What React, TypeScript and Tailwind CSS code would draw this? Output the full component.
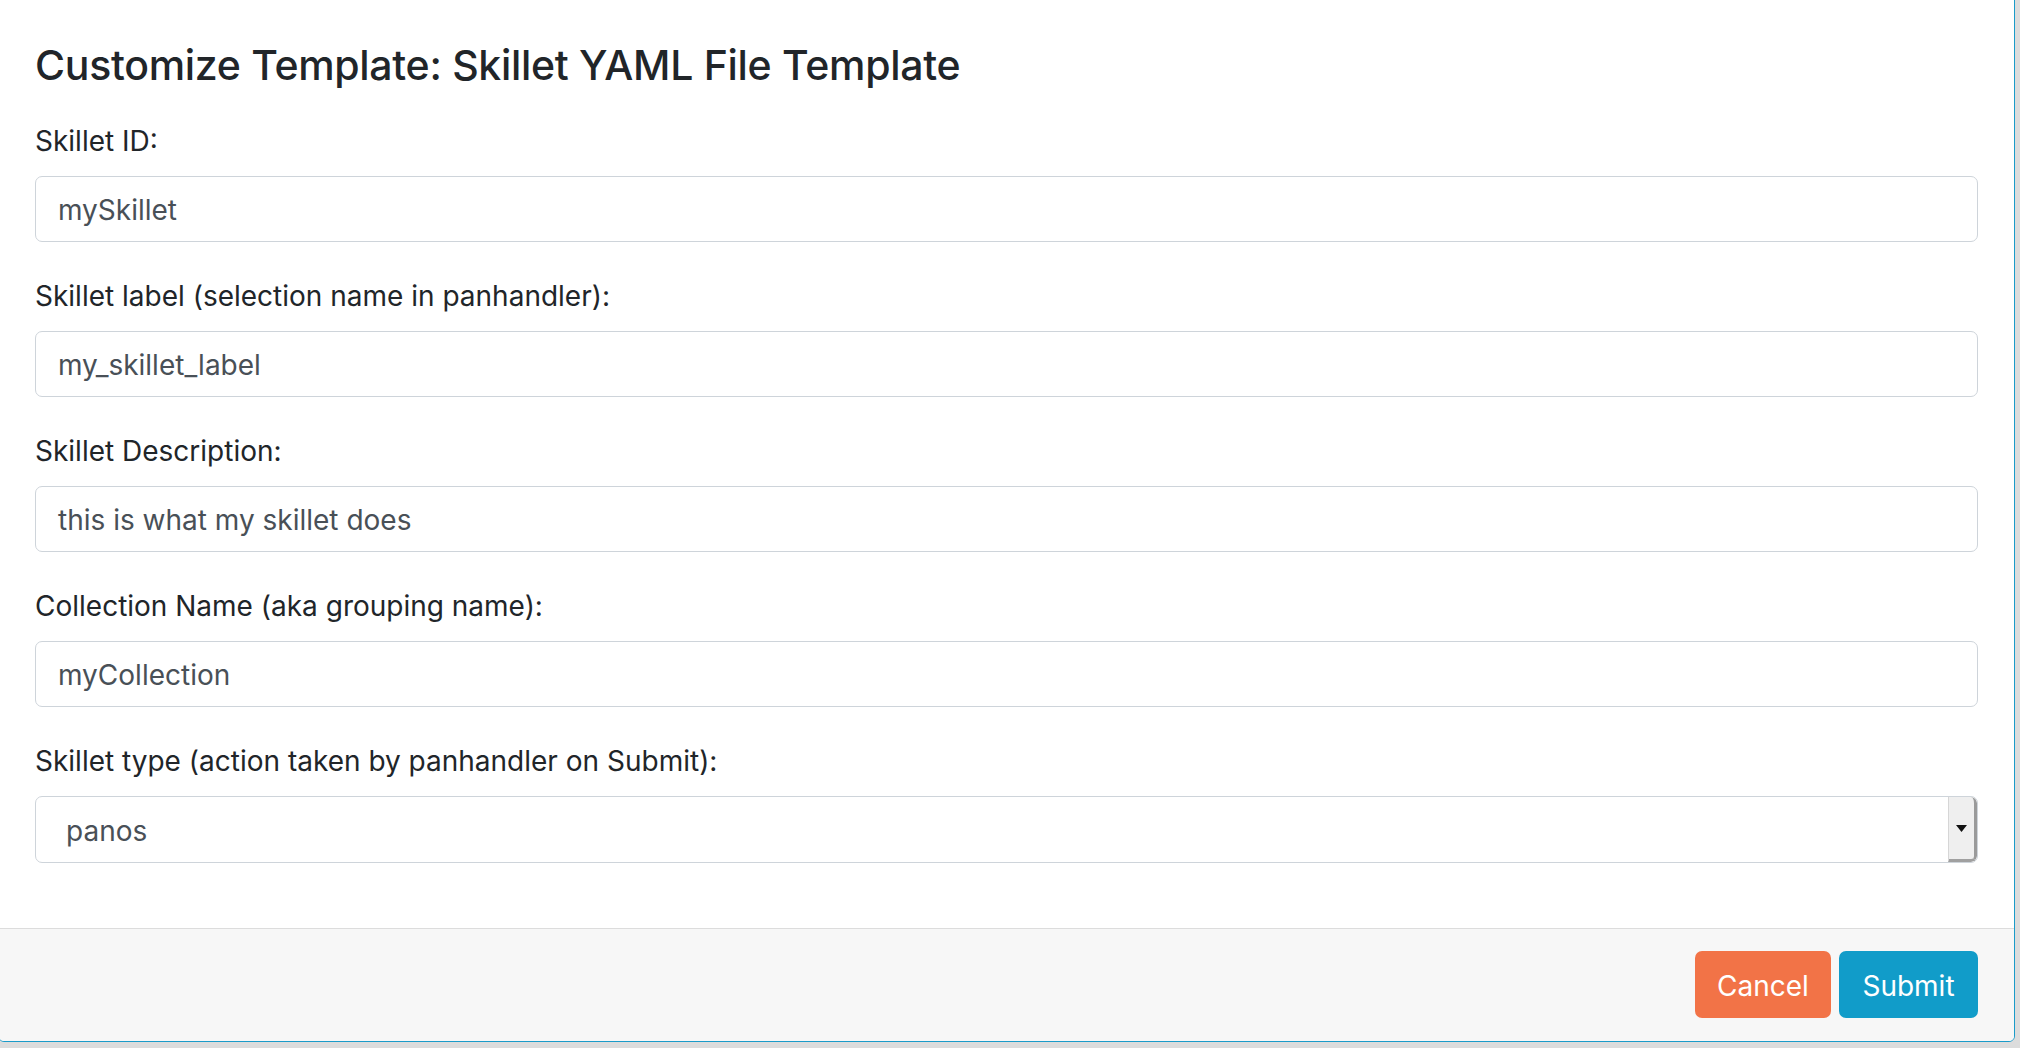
import React from "react";

const fields = [
  { label: "Skillet ID:", value: "mySkillet" },
  { label: "Skillet label (selection name in panhandler):", value: "my_skillet_label" },
  { label: "Skillet Description:", value: "this is what my skillet does" },
  { label: "Collection Name (aka grouping name):", value: "myCollection" },
];

export default function App() {
  return (
    <div
      className="w-[2020px] h-[1048px] overflow-hidden bg-[#dcdcdc]"
      style={{ fontFamily: "Inter, 'Liberation Sans', Arial, sans-serif" }}
    >
      <div className="-ml-[2px] -mt-[10px] w-[2017px] h-[1052px] border border-[#1a9bc9] rounded-[6px] bg-white flex flex-col overflow-hidden">
        <div className="flex-1 flex flex-col px-[36px] pt-[48px]">
          <h4 className="text-[41px] leading-[50px] h-[50px] font-medium text-[#212529] tracking-[-0.3px] mb-[29px] pt-[1px]">
            Customize Template: Skillet YAML File Template
          </h4>
          <div className="flex flex-col gap-[31px]">
            {fields.map((f) => (
              <div key={f.label} className="flex flex-col">
                <label className="text-[28px] leading-[42px] h-[42px] text-[#212529] mb-[16px] pt-[2px]">
                  {f.label}
                </label>
                <div className="h-[66px] border border-[#ced4da] rounded-[7px] flex items-center px-[22px] pt-[2px] text-[28px] text-[#495057]">
                  {f.value}
                </div>
              </div>
            ))}
            <div className="flex flex-col">
              <label className="text-[28px] leading-[42px] h-[42px] text-[#212529] mb-[16px] pt-[2px]">
                Skillet type (action taken by panhandler on Submit):
              </label>
              <div className="h-[67px] border border-[#ced4da] rounded-[7px] flex items-stretch text-[28px] text-[#495057] overflow-hidden">
                <div className="flex-1 flex items-center pl-[30px] pt-[2px]">panos</div>
                <div className="w-[29px] bg-[#efefef] border-l border-[#d6d6d6] border-r-[3px] border-r-[#9a9a9a] border-b-[3px] border-b-[#a0a0a0] rounded-r-[6px] flex items-center justify-center">
                  <svg width="11" height="7" viewBox="0 0 11 7">
                    <polygon points="0,0 11,0 5.5,7" fill="#111" />
                  </svg>
                </div>
              </div>
            </div>
          </div>
        </div>
        <div className="h-[113px] border-t border-[#dcdcdc] bg-[#f7f7f7] flex items-start justify-end gap-[8px] px-[36px] pt-[22px]">
          <button className="w-[136px] h-[67px] rounded-[7px] bg-[#f27347] text-white text-[28px] flex items-center justify-center pt-[2px]">
            Cancel
          </button>
          <button className="w-[139px] h-[67px] rounded-[7px] bg-[#119cc9] text-white text-[28px] flex items-center justify-center pt-[2px]">
            Submit
          </button>
        </div>
      </div>
    </div>
  );
}
